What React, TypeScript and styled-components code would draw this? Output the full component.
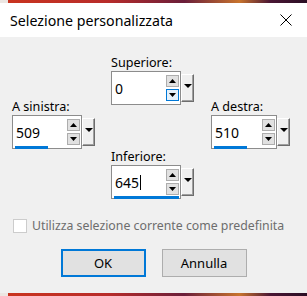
import styled, { createGlobalStyle } from "styled-components";

const GlobalStyle = createGlobalStyle`
	html, body {
		margin: 0;
		padding: 0;
	}
	body {
		width: 307px;
		height: 296px;
		overflow: hidden;
		background: linear-gradient(
			90deg,
			#ece6e2 0 8px,
			#c9341f 8px,
			#b82c2a 35%,
			#6a1e3a 60%,
			#c8742e 78%,
			#4a1634 88%,
			#2a0e24 100%
		);
		font-family: "Noto Sans", "Liberation Sans", sans-serif;
	}
`;

const Window = styled.div`
	margin-top: 3px;
	height: 290px;
	display: flex;
	flex-direction: column;
	background: #f0f0f0;
`;

const TitleBar = styled.div`
	height: 34px;
	background: #ffffff;
	display: flex;
	align-items: center;
	justify-content: space-between;
	padding: 0 15px 0 10px;
	font-size: 14.2px;
	color: #000;
`;

const Body = styled.div`
	flex: 1;
	display: flex;
	flex-direction: column;
	padding: 17px 0 0 12px;
`;

const SpinArea = styled.div`
	display: grid;
	grid-template-columns: 99px 100px 1fr;
	align-items: start;
`;

const Column = styled.div<{ offset: number }>`
	display: flex;
	flex-direction: column;
	gap: 43px;
	margin-top: ${(p) => p.offset}px;
`;

const Cell = styled.div`
	display: flex;
	flex-direction: column;
`;

const Label = styled.div`
	font-size: 12.6px;
	line-height: 17px;
	color: #000;
`;

const FieldRow = styled.div`
	display: flex;
	align-items: flex-start;
`;

const Field = styled.div<{ width: number }>`
	position: relative;
	box-sizing: border-box;
	width: ${(p) => p.width}px;
	height: 34px;
	background: #fff;
	border: 1px solid #8c8c8c;
	display: flex;
	align-items: center;
	justify-content: space-between;
	padding: 0 1px 0 3px;
`;

const Value = styled.span`
	font-size: 14px;
	color: #000;
	display: flex;
	align-items: center;
`;

const Caret = styled.span`
	display: inline-block;
	width: 1px;
	height: 15px;
	margin-left: 1px;
	background: #000;
`;

const SpinButtons = styled.div`
	display: flex;
	flex-direction: column;
	gap: 2px;
`;

const SpinButton = styled.div<{ hover?: boolean }>`
	box-sizing: border-box;
	width: 13px;
	height: 12px;
	border: 1px solid ${(p) => (p.hover ? "#0078d7" : "#adadad")};
	background: ${(p) => (p.hover ? "#e5f1fb" : "#e1e1e1")};
	display: flex;
	align-items: center;
	justify-content: center;
`;

const Progress = styled.div`
	position: absolute;
	left: 2px;
	bottom: -1px;
	height: 3px;
	background: #0078d7;
`;

const Dropdown = styled.div`
	box-sizing: border-box;
	width: 13px;
	height: 28px;
	margin-top: 3px;
	background: #f0f0f0;
	border-top: 1px solid #fff;
	border-left: 1px solid #fff;
	border-right: 1px solid #6d6d6d;
	border-bottom: 1px solid #6d6d6d;
	box-shadow: inset -1px -1px 0 #a0a0a0;
	display: flex;
	justify-content: center;
	padding-top: 9px;
`;

const CheckRow = styled.label`
	display: flex;
	align-items: center;
	gap: 5px;
	margin: 18px 0 0 1px;
	font-size: 12.3px;
	color: #6d6d6d;
`;

const CheckBox = styled.span`
	box-sizing: border-box;
	width: 14px;
	height: 14px;
	border: 1px solid #cccccc;
	background: #fff;
`;

const Buttons = styled.div`
	display: flex;
	justify-content: center;
	gap: 16px;
	margin: 15px 12px 0 0;
`;

const Button = styled.button<{ primary?: boolean }>`
	box-sizing: border-box;
	width: 85px;
	height: 28px;
	background: #e1e1e1;
	border: ${(p) => (p.primary ? "2px solid #0078d7" : "1px solid #adadad")};
	font-family: "Noto Sans", "Liberation Sans", sans-serif;
	font-size: 13px;
	color: #000;
	padding: 0;
`;

const Tri = ({ up, w = 7 }: { up?: boolean; w?: number }) => {
	const h = Math.ceil(w / 2);
	return (
		<svg width={w} height={h} viewBox={`0 0 ${w} ${h}`}>
			{up ? (
				<polygon points={`0,${h} ${w},${h} ${w / 2},0`} fill="#000" />
			) : (
				<polygon points={`0,0 ${w},0 ${w / 2},${h}`} fill="#000" />
			)}
		</svg>
	);
};

interface SpinProps {
	label: string;
	value: string;
	width: number;
	bar?: number;
	caret?: boolean;
	hoverDown?: boolean;
}

const Spin = ({ label, value, width, bar, caret, hoverDown }: SpinProps) => (
	<Cell>
		<Label>{label}</Label>
		<FieldRow>
			<Field width={width}>
				<Value>
					{value}
					{caret && <Caret />}
				</Value>
				<SpinButtons>
					<SpinButton>
						<Tri up />
					</SpinButton>
					<SpinButton hover={hoverDown}>
						<Tri />
					</SpinButton>
				</SpinButtons>
				{bar ? <Progress style={{ width: bar }} /> : null}
			</Field>
			<Dropdown>
				<Tri w={8} />
			</Dropdown>
		</FieldRow>
	</Cell>
);

const App = () => {
	return (
		<>
			<GlobalStyle />
			<Window>
				<TitleBar>
					<span>Selezione personalizzata</span>
					<svg width="12" height="12" viewBox="0 0 12 12">
						<path d="M0.5 0.5 L11.5 11.5 M11.5 0.5 L0.5 11.5" stroke="#000" strokeWidth="1" />
					</svg>
				</TitleBar>
				<Body>
					<SpinArea>
						<Column offset={44}>
							<Spin label="A sinistra:" value="509" width={70} bar={33} />
						</Column>
						<Column offset={0}>
							<Spin label="Superiore:" value="0" width={70} hoverDown />
							<Spin label="Inferiore:" value="645" width={70} bar={65} caret />
						</Column>
						<Column offset={44}>
							<Spin label="A destra:" value="510" width={66} bar={33} />
						</Column>
					</SpinArea>
					<CheckRow>
						<CheckBox />
						Utilizza selezione corrente come predefinita
					</CheckRow>
					<Buttons>
						<Button primary>OK</Button>
						<Button>Annulla</Button>
					</Buttons>
				</Body>
			</Window>
		</>
	);
};

export default App;
